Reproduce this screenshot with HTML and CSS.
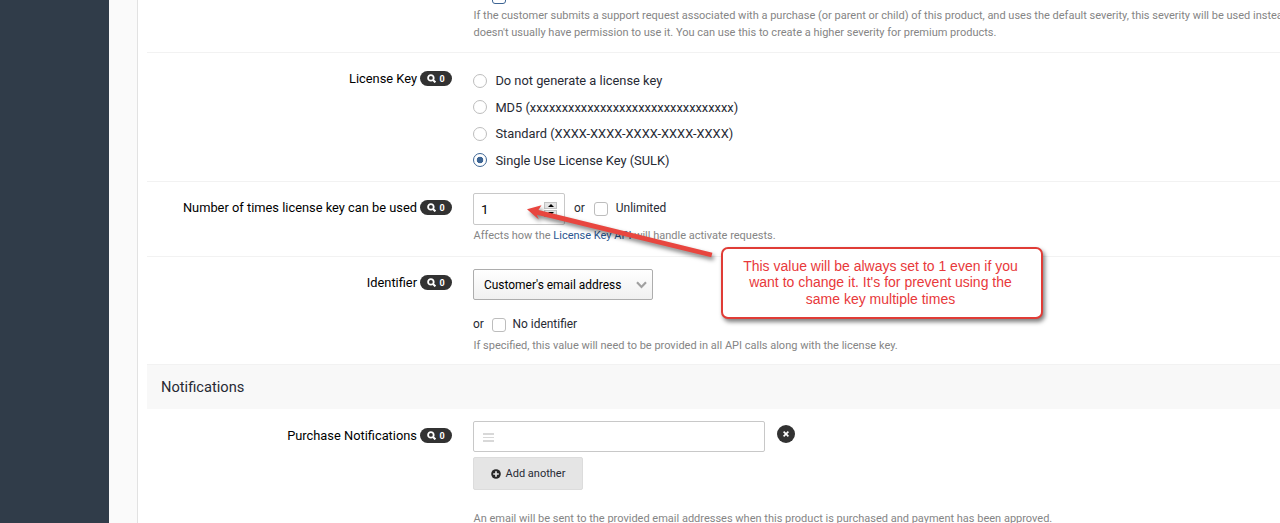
FILE: index.html
```html
<!DOCTYPE html>
<html lang="en">
<head>
    <meta charset="UTF-8">
    <meta name="viewport" content="width=device-width, initial-scale=1.0">
    <title>License Keys</title>
    <link rel="stylesheet" href="styles.css">
</head>
<body>
    <svg class="symbols" width="0" height="0">
        <symbol id="search" viewBox="0 0 9 9">
            <circle cx="3.9" cy="3.9" r="2.8" fill="none" stroke="#fff" stroke-width="1.8"/>
            <path d="M6 6l2.4 2.4" stroke="#fff" stroke-width="2"/>
        </symbol>
    </svg>
    <div class="page">
        <div class="sidebar"></div>
        <div class="gutter"></div>
        <div class="panel">
            <div class="row row-severity">
                <div class="label"></div>
                <div class="field">
                    <span class="checkbox checkbox-focus"></span>
                    <div class="help">If the customer submits a support request associated with a purchase (or parent or child) of this product, and uses the default severity, this severity will be used instea<br>doesn't usually have permission to use it. You can use this to create a higher severity for premium products.</div>
                </div>
            </div>
            <div class="row row-license">
                <div class="label">License Key <span class="badge"><svg><use href="#search"/></svg>0</span></div>
                <div class="field radios">
                    <label class="radio-item"><span class="radio"></span>Do not generate a license key</label>
                    <label class="radio-item"><span class="radio"></span>MD5 (xxxxxxxxxxxxxxxxxxxxxxxxxxxxxxxx)</label>
                    <label class="radio-item"><span class="radio"></span>Standard (XXXX-XXXX-XXXX-XXXX-XXXX)</label>
                    <label class="radio-item"><span class="radio checked"></span>Single Use License Key (SULK)</label>
                </div>
            </div>
            <div class="row row-uses">
                <div class="label">Number of times license key can be used <span class="badge"><svg><use href="#search"/></svg>0</span></div>
                <div class="field">
                    <div class="inline">
                        <div class="number">
                            <span>1</span>
                            <span class="spinner">
                                <span class="spin"><i class="up"></i></span>
                                <span class="spin"><i class="down"></i></span>
                            </span>
                        </div>
                        <span class="or">or</span>
                        <span class="checkbox"></span>
                        <span class="check-text">Unlimited</span>
                    </div>
                    <div class="help">Affects how the <a class="link">License Key API</a> will handle activate requests.</div>
                </div>
            </div>
            <div class="row row-identifier">
                <div class="label">Identifier <span class="badge"><svg><use href="#search"/></svg>0</span></div>
                <div class="field">
                    <div class="select">
                        <span>Customer's email address</span>
                        <svg width="11" height="8" viewBox="0 0 11 8"><path d="M1 1.3l4.5 4.6L10 1.3" fill="none" stroke="#a0a0a0" stroke-width="2.2"/></svg>
                    </div>
                    <div class="inline alt">
                        <span class="or">or</span>
                        <span class="checkbox"></span>
                        <span class="check-text">No identifier</span>
                    </div>
                    <div class="help">If specified, this value will need to be provided in all API calls along with the license key.</div>
                </div>
            </div>
            <h2 class="section-title">Notifications</h2>
            <div class="row row-notify">
                <div class="label">Purchase Notifications <span class="badge"><svg><use href="#search"/></svg>0</span></div>
                <div class="field">
                    <div class="stack-item">
                        <div class="stack-input"><span class="drag"></span></div>
                        <span class="remove"><svg width="6" height="6" viewBox="0 0 6 6"><path d="M.6.6l4.8 4.8M5.4.6L.6 5.4" stroke="#fff" stroke-width="1.6"/></svg></span>
                    </div>
                    <div class="button">
                        <svg width="10" height="10" viewBox="0 0 10 10"><circle cx="5" cy="5" r="4.8" fill="#272727"/><path d="M5 2.2v5.6M2.2 5h5.6" stroke="#e5e5e5" stroke-width="1.7"/></svg>
                        <span>Add another</span>
                    </div>
                    <div class="help">An email will be sent to the provided email addresses when this product is purchased and payment has been approved.</div>
                </div>
            </div>
        </div>
    </div>

    <svg class="arrow" width="200" height="70" viewBox="520 195 200 70">
        <path d="M527 209.2L541.5 205.2L538.5 210.1L712.4 252.8L711.2 257.2L536.8 214.8L538.8 219.6Z" fill="#e8463f"/>
    </svg>
    <div class="callout">This value will be always set to 1 even if you<br>want to change it. It's for prevent using the<br>same key multiple times</div>
</body>
</html>
```
FILE: styles.css
```css
* {
    box-sizing: border-box;
}
body {
    margin: 0;
    height: 523px;
    overflow: hidden;
    position: relative;
    background: #fff;
    font-family: Roboto, sans-serif;
    font-size: 11.95px;
    color: #272a34;
}
.symbols {
    position: absolute;
}
.page {
    display: flex;
    height: 523px;
}
.sidebar {
    width: 109px;
    flex: none;
    background: #303c49;
}
.gutter {
    width: 29px;
    flex: none;
    background: #fafafa;
    border-right: 1px solid #e2e2e2;
}
.panel {
    flex: 1;
    min-width: 0;
    padding-left: 9px;
}
.row {
    display: flex;
    border-bottom: 1px solid #f2f2f2;
}
.label {
    width: 305px;
    flex: none;
    display: flex;
    justify-content: flex-end;
    align-items: center;
    align-self: flex-start;
    height: 20px;
    margin-right: 21px;
    font-size: 12.85px;
    color: #000;
    white-space: nowrap;
}
.badge {
    display: inline-flex;
    align-items: center;
    justify-content: center;
    gap: 3px;
    width: 32px;
    height: 15px;
    margin: 1px 0 0 3px;
    border-radius: 8px;
    background: #323232;
    color: #fff;
    font-size: 9px;
    font-weight: 700;
}
.badge svg {
    width: 9px;
    height: 9px;
}
.field {
    flex: 1;
    min-width: 0;
    white-space: nowrap;
}
.help {
    padding-left: 0.5px;
    font-size: 11px;
    line-height: 17px;
    color: #858585;
}
.link {
    color: #2a5590;
}
.checkbox {
    display: block;
    flex: none;
    width: 14px;
    height: 14px;
    border: 1px solid #bdbdbd;
    border-radius: 3px;
    background: #fff;
}
.checkbox-focus {
    margin: -10px 0 0 19px;
    border-color: #3d6594;
}
.row-severity {
    height: 53px;
}
.row-severity .help {
    margin-top: 3px;
}
.row-license {
    height: 129px;
    padding-top: 15px;
}
.radio-item {
    display: flex;
    align-items: center;
    height: 26.6px;
    font-size: 12.85px;
}
.radios {
    margin-top: -0.6px;
}
.radio {
    width: 14px;
    height: 14px;
    margin-right: 8.4px;
    border: 1px solid #bdbdbd;
    border-radius: 50%;
}
.radio.checked {
    border-color: #3d6594;
    background: radial-gradient(circle, #3d6594 3px, #fff 3.6px);
}
.row-uses {
    height: 75px;
    padding-top: 11px;
}
.row-uses .label {
    margin-top: 4px;
}
.inline {
    display: flex;
    align-items: center;
}
.number {
    display: flex;
    align-items: center;
    justify-content: space-between;
    width: 92px;
    height: 32px;
    padding: 0 7px;
    border: 1px solid #c8c8c8;
    border-radius: 2px;
    font-size: 13.5px;
    color: #000;
}
.spinner {
    display: flex;
    flex-direction: column;
    gap: 1px;
    width: 13px;
}
.spin {
    display: flex;
    align-items: center;
    justify-content: center;
    height: 7px;
    background: #e4e4e4;
    border: 1px solid #c2c2c2;
}
.up,
.down {
    border: 3px solid transparent;
    border-top-width: 0;
    border-bottom: 3px solid #000;
}
.down {
    border-bottom: 0;
    border-top: 3px solid #000;
}
.row-uses .or {
    margin: -2px 9px 0;
}
.row-uses .check-text {
    margin: -2px 0 0 8px;
}
.row-uses .help {
    margin-top: 2px;
}
.row-identifier {
    height: 108px;
    padding-top: 12px;
}
.row-identifier .label {
    margin-top: 3px;
}
.select {
    display: flex;
    align-items: center;
    justify-content: space-between;
    width: 180px;
    height: 31px;
    padding: 1px 5px 0 10px;
    border: 1px solid #adadad;
    border-radius: 2px;
    background: linear-gradient(#fff, #f0f0f0);
    color: #000;
}
.inline.alt {
    margin-top: 18px;
}
.alt .or,
.alt .check-text {
    margin-top: -2px;
}
.alt .or {
    width: 19px;
}
.alt .check-text {
    margin-left: 6.5px;
}
.row-identifier .help {
    margin-top: 5px;
}
.section-title {
    margin: 0;
    height: 44px;
    padding-left: 14px;
    background: #f8f8f8;
    font-size: 14.67px;
    font-weight: 400;
    line-height: 45px;
}
.row-notify {
    height: 114px;
    padding-top: 12px;
    border: 0;
}
.row-notify .label {
    margin-top: 4px;
}
.stack-item {
    display: flex;
}
.stack-input {
    width: 292px;
    height: 31px;
    padding: 11px 9px;
    border: 1px solid #c8c8c8;
    border-radius: 2px;
}
.drag {
    display: block;
    width: 11px;
    height: 9px;
    background: repeating-linear-gradient(#d8d8d8 0 1.5px, transparent 1.5px 3.5px);
}
.remove {
    display: flex;
    align-items: center;
    justify-content: center;
    width: 18px;
    height: 18px;
    margin: 4px 0 0 12px;
    border-radius: 50%;
    background: #323232;
}
.button {
    display: flex;
    align-items: center;
    justify-content: center;
    gap: 5px;
    width: 110px;
    height: 33px;
    margin-top: 5px;
    border: 1px solid #dcdcdc;
    border-radius: 2px;
    background: #e5e5e5;
    font-size: 11px;
}
.row-notify .help {
    height: 13px;
    margin-top: 20px;
}
.arrow {
    position: absolute;
    left: 520px;
    top: 195px;
    filter: drop-shadow(2px 3px 2px rgba(0, 0, 0, 0.5));
}
.callout {
    position: absolute;
    left: 721px;
    top: 247px;
    width: 322px;
    height: 72px;
    padding: 8.5px 3px 0 0;
    border: 2px solid #e03c36;
    border-radius: 7px;
    background: #fff;
    box-shadow: 2px 3px 4px rgba(0, 0, 0, 0.5);
    color: #e8393b;
    font-family: "Liberation Sans", Arial, sans-serif;
    font-size: 14px;
    line-height: 16.5px;
    text-align: center;
}
```
